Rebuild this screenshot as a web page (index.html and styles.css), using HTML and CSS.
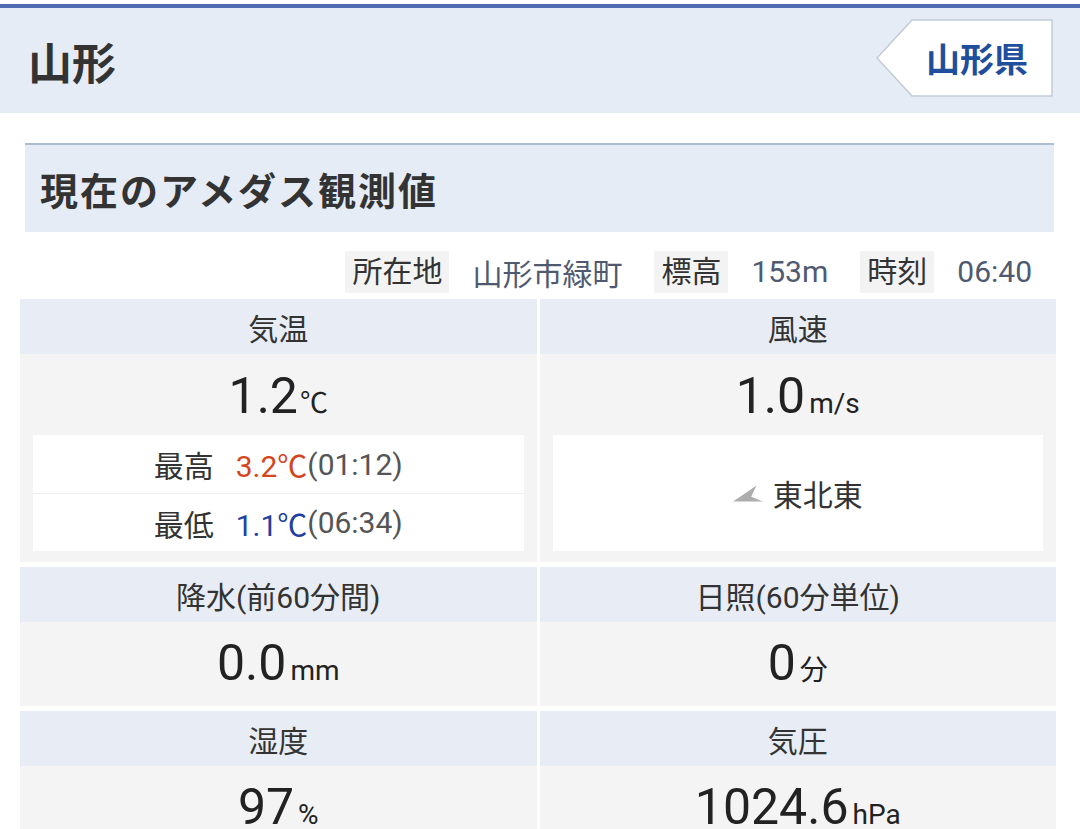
FILE: index.html
```html
<!DOCTYPE html>
<html lang="ja">
<head>
    <meta charset="UTF-8">
    <meta name="viewport" content="width=device-width, initial-scale=1.0">
    <title>山形 - 現在のアメダス観測値</title>
    <link rel="stylesheet" href="styles.css">
</head>
<body>
    <!-- Page header -->
    <header class="site-header">
        <h1 class="site-title">山形</h1>
        <a class="pref-link" href="#">
            <svg class="pref-shape" viewBox="0 0 177 78" preserveAspectRatio="none">
                <polygon points="36,1 176,1 176,77 36,77 1,39" fill="#fff" stroke="#c4cbd6" stroke-width="1.5"/>
            </svg>
            <span class="pref-name">山形県</span>
        </a>
    </header>

    <main class="content">
        <section class="amedas">
            <h2 class="amedas-title">現在のアメダス観測値</h2>

            <!-- Station info -->
            <div class="station">
                <span class="station-label">所在地</span>
                <span class="station-value">山形市緑町</span>
                <span class="station-label">標高</span>
                <span class="station-value">153m</span>
                <span class="station-label">時刻</span>
                <span class="station-value last">06:40</span>
            </div>

            <!-- Observation values -->
            <div class="obs-grid">
                <div class="obs-cell">
                    <div class="obs-head">気温</div>
                    <div class="obs-body">
                        <div class="obs-value">1.2<span class="unit unit-deg">℃</span></div>
                        <div class="obs-extra">
                            <div class="extra-row">
                                <span class="extra-label">最高</span>
                                <span class="temp-high">3.2℃</span><span class="extra-time">(01:12)</span>
                            </div>
                            <div class="extra-row">
                                <span class="extra-label">最低</span>
                                <span class="temp-low">1.1℃</span><span class="extra-time">(06:34)</span>
                            </div>
                        </div>
                    </div>
                </div>
                <div class="obs-cell">
                    <div class="obs-head">風速</div>
                    <div class="obs-body">
                        <div class="obs-value">1.0<span class="unit">m/s</span></div>
                        <div class="obs-extra wind">
                            <svg class="wind-arrow" viewBox="0 0 28 16">
                                <polygon points="0,15.5 22,0.5 17,11 28,15.5" fill="#adadad"/>
                            </svg>
                            <span class="wind-dir">東北東</span>
                        </div>
                    </div>
                </div>

                <div class="obs-cell">
                    <div class="obs-head">降水(前60分間)</div>
                    <div class="obs-body short">
                        <div class="obs-value">0.0<span class="unit">mm</span></div>
                    </div>
                </div>
                <div class="obs-cell">
                    <div class="obs-head">日照(60分単位)</div>
                    <div class="obs-body short">
                        <div class="obs-value">0<span class="unit">分</span></div>
                    </div>
                </div>

                <div class="obs-cell">
                    <div class="obs-head">湿度</div>
                    <div class="obs-body short">
                        <div class="obs-value">97<span class="unit">%</span></div>
                    </div>
                </div>
                <div class="obs-cell">
                    <div class="obs-head">気圧</div>
                    <div class="obs-body short">
                        <div class="obs-value">1024.6<span class="unit">hPa</span></div>
                    </div>
                </div>
            </div>
        </section>
    </main>
</body>
</html>
```

FILE: styles.css
```css
body {
    margin: 0;
    padding-top: 4px;
    background: #fff;
    font-family: Roboto, "Noto Sans CJK JP", sans-serif;
    color: #333;
}
.site-header {
    display: flex;
    align-items: center;
    justify-content: space-between;
    height: 109px;
    box-sizing: border-box;
    border-top: 4px solid #4d6cb1;
    background: #e5ecf5;
    padding: 0 27px 0 28px;
}
.site-title {
    margin: 0;
    font-size: 44px;
    font-weight: 700;
    color: #333;
}
.pref-link {
    position: relative;
    display: flex;
    align-items: center;
    width: 177px;
    height: 78px;
    margin-bottom: 6px;
    box-sizing: border-box;
    padding-left: 50px;
    text-decoration: none;
}
.pref-shape {
    position: absolute;
    top: 0;
    left: 0;
    width: 100%;
    height: 100%;
}
.pref-name {
    position: relative;
    font-size: 34px;
    font-weight: 700;
    color: #1f4e9c;
}
.content {
    padding: 30px 24px 0 20px;
}
.amedas-title {
    margin: 0 2px 0 5px;
    height: 89px;
    box-sizing: border-box;
    border-top: 2px solid #adbccf;
    background: #e5ecf5;
    display: flex;
    align-items: center;
    padding-left: 15px;
    font-size: 38px;
    font-weight: 700;
    letter-spacing: 2px;
    color: #333;
}
.station {
    display: flex;
    justify-content: flex-end;
    align-items: center;
    height: 67px;
    box-sizing: border-box;
    padding: 12px 24px 0 0;
    font-size: 30px;
}
.station-label {
    background: #f3f3f3;
    color: #333;
    padding: 0 7px;
    line-height: 42px;
}
.station-value {
    color: #4f5a70;
    margin: 0 32px 0 23px;
}
.station-value.last {
    margin-right: 0;
}
.obs-grid {
    display: grid;
    grid-template-columns: 1fr 1fr;
    column-gap: 3px;
    row-gap: 5px;
}
.obs-cell {
    display: flex;
    flex-direction: column;
}
.obs-head {
    height: 55px;
    display: flex;
    align-items: center;
    justify-content: center;
    background: #e8edf5;
    font-size: 30px;
    color: #333;
}
.obs-body {
    flex: 1;
    background: #f4f4f4;
    padding: 10px 13px 11px;
}
.obs-body.short {
    padding: 9px 13px 11px;
}
.obs-value {
    height: 64px;
    line-height: 64px;
    text-align: center;
    font-size: 50px;
    color: #222;
}
.unit {
    font-size: 28px;
    margin-left: 4px;
}
.unit-deg {
    margin-left: 2px;
}
.obs-extra {
    margin-top: 7px;
    background: #fff;
    font-size: 30px;
}
.extra-row {
    height: 58px;
    box-sizing: border-box;
    display: flex;
    align-items: center;
    justify-content: center;
}
.extra-row + .extra-row {
    border-top: 1px solid #f0f0f0;
}
.extra-label {
    color: #333;
    margin-right: 22px;
}
.temp-high {
    color: #d4451c;
}
.temp-low {
    color: #1f409e;
}
.extra-time {
    color: #555;
}
.obs-extra.wind {
    height: 116px;
    display: flex;
    align-items: center;
    justify-content: center;
}
.wind-arrow {
    width: 30px;
    height: 17px;
    margin: 0 10px 0 0;
}
.wind-dir {
    color: #333;
    font-size: 30px;
}
```
